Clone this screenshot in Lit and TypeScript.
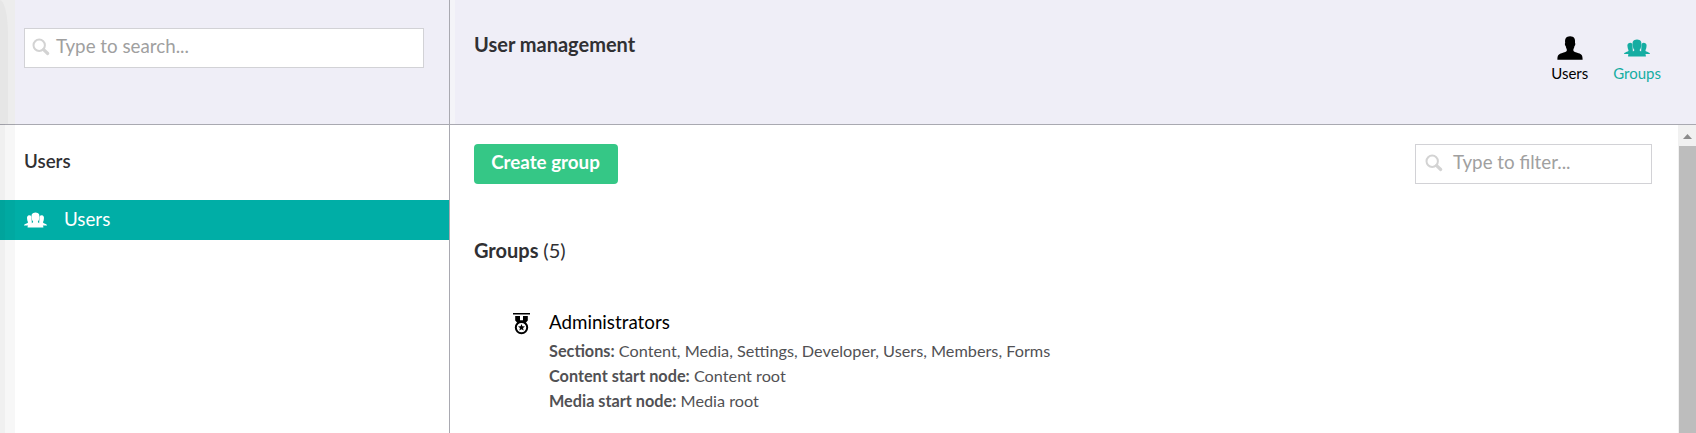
import { LitElement, html, css, svg } from "lit";
import { customElement } from "lit/decorators.js";

const magnifier = html`<svg class="glass" viewBox="0 0 18 18" width="18" height="18">
  <circle cx="7.2" cy="7.2" r="5.7" fill="none" stroke="#d3d3d3" stroke-width="2"/>
  <path d="M11.6 11.6L15.7 15.5" stroke="#d3d3d3" stroke-width="3.2" stroke-linecap="round"/>
</svg>`;

const crowdShapes = svg`
  <path d="M0 13.2C.4 11.6 3.4 11.5 4 10.4C4.1 9.6 3.2 8.8 3.2 7.4C2.6 5 3.4 3.4 5.4 3.3C7.2 3.3 7.8 4.4 7.6 7L8 13.4H0Z"/>
  <path d="M23 13.2C22.6 11.6 19.6 11.5 19 10.4C18.9 9.6 19.8 8.8 19.8 7.4C20.4 5 19.6 3.4 17.6 3.3C15.8 3.3 15.2 4.4 15.4 7L15 13.4H23Z"/>
  <path class="front" d="M3.6 15.5C3.6 12.2 5.2 12 7 11.4C8.8 10.8 9.2 10.5 9.1 9.6C8.2 8.6 7.9 7.3 7.8 6C7.1 2.5 8 .5 11.5 .4C15 .5 15.9 2.5 15.2 6C15.1 7.3 14.8 8.6 13.9 9.6C13.8 10.5 14.2 10.8 16 11.4C17.8 12 19.4 12.2 19.4 15.5Z"/>`;

const crowd = (w: number, h: number) => html`<svg viewBox="0 0 23 16" width=${w} height=${h} preserveAspectRatio="none" fill="currentColor">${crowdShapes}</svg>`;

const person = html`<svg viewBox="0 0 26 24" width="26" height="24" fill="currentColor">
  <path d="M.4 23.7C.4 18.8 1.8 18.1 4.6 17.2C7.6 16.2 9.8 15.9 9.9 14.2C10 13 9 12 8.7 9.9C7.9 9.6 7.6 7.2 8.2 6.9C7.7 2.6 9 .3 13.1 .2C17.2 .3 18.4 2.6 18 6.9C18.6 7.2 18.3 9.6 17.5 9.9C17.2 12 16.2 13 16.3 14.2C16.4 15.9 18.6 16.2 21.6 17.2C24.4 18.1 25.6 18.8 25.6 23.7Z"/>
</svg>`;

const medal = html`<svg viewBox="0 0 17 22" width="17" height="22">
  <path d="M0 0H17V1.5H0Z"/>
  <path d="M2.2 3H7V7.2H10V3H14.8V7.6L12.5 10H4.5L2.2 7.6Z"/>
  <circle cx="8.5" cy="14.6" r="5.7" fill="#fff" stroke="#000" stroke-width="2"/>
  <path d="M8.5 10.9L9.45 13.3L12 13.45L10 15.1L10.7 17.6L8.5 16.2L6.3 17.6L7 15.1L5 13.45L7.55 13.3Z"/>
</svg>`;

@customElement("app-root")
export class AppRoot extends LitElement {
  static styles = css`
    :host { display: block; height: 433px; overflow: hidden; background: #fff; color: #303033;
      font-family: Lato, "Liberation Sans", sans-serif; font-size: 18.75px; line-height: 24px; }
    * { box-sizing: border-box; }
    svg { display: block; flex: none; }
    .page { display: grid; grid-template-columns: 450px 1fr; height: 433px; position: relative; }
    .side, .main { display: flex; flex-direction: column; min-width: 0; }
    .side { border-right: 1px solid #a9a9b1; }
    .top { height: 125px; flex: none; background: #efeef7; border-bottom: 1px solid #a9a9b1; display: flex; }
    .side .top { padding: 28px 25px 0 24px; }
    .main .top { padding: 32px 35px 0 24px; justify-content: space-between; box-shadow: inset 5px 0 #f4f4f8; }
    .field { display: flex; height: 40px; border: 1px solid #d2d2d6; background: #fff; color: #a0a0a0; }
    .search { width: 400px; padding: 5px 0 0 7px; gap: 6px; }
    .search .glass { margin-top: 4px; }
    .filter { width: 237px; padding: 5px 0 0 9px; gap: 10px; }
    .filter .glass { margin-top: 4px; }
    .sidehead { padding: 24px 24px 0; height: 75px; margin: 0; font-size: 18.75px; font-weight: 600; line-height: 24px; }
    .item { height: 40px; display: flex; padding: 7px 24px 0; gap: 17px; background: #00aea6; color: #fff; }
    .item svg { margin-top: 5px; }
    h1, h2 { margin: 0; font-size: 20px; font-weight: 700; line-height: 24px; }
    .tabs { display: flex; gap: 25px; font-size: 15px; line-height: 20px; color: #000; }
    .tab { display: flex; flex-direction: column; align-items: center; }
    .tab svg { margin-top: 4px; }
    .tab.users svg { margin-bottom: 3px; }
    .tab.on { color: #15ada2; }
    .tab.on svg { margin: 7px 0 6px; }
    .body { display: grid; grid-template-columns: 1fr 18px; flex: 1; }
    .content { padding: 19px 26px 0 24px; }
    .bar { display: flex; justify-content: space-between; }
    .create { width: 144px; height: 40px; border: 0; border-radius: 4px; background: #35c786; color: #fff;
      font: 700 18.75px/24px Lato, sans-serif; padding: 0 1px 5px 0; }
    h2 { margin-top: 54px; }
    .thin { font-weight: 400; }
    .group { display: flex; padding: 48px 0 0 39px; gap: 19px; }
    .group svg { margin-top: 3px; }
    .name { color: #000; height: 28px; }
    .line { font-size: 16.25px; line-height: 25px; color: #515154; }
    .scroll { background: #f1f1f1; display: flex; flex-direction: column; }
    .up { height: 21px; display: flex; justify-content: center; padding-top: 9px; }
    .thumb { flex: 1; margin-left: 1px; background: #bdbdbd; }
    .shade { position: absolute; left: 0; top: 0; width: 15px; height: 433px; pointer-events: none;
      background: linear-gradient(90deg, rgba(0,0,0,.06) 0 5px, rgba(0,0,0,.03) 5px 15px); }
    .corner { position: absolute; left: 0; top: 0; width: 15px; height: 124px; background: #ededed; }
    .curve { position: absolute; left: 0; top: 0; width: 8px; height: 124px; background: #e6e6e6; border-top-right-radius: 8px 35px; }
  `;

  render() {
    return html`<div class="page">
      <aside class="side">
        <div class="top"><div class="field search">${magnifier}<span>Type to search...</span></div></div>
        <h3 class="sidehead">Users</h3>
        <div class="item">${crowd(23, 16)}<span>Users</span></div>
      </aside>
      <main class="main">
        <header class="top">
          <h1>User management</h1>
          <nav class="tabs">
            <div class="tab users">${person}<span>Users</span></div>
            <div class="tab on">${crowd(26, 18)}<span>Groups</span></div>
          </nav>
        </header>
        <div class="body">
          <section class="content">
            <div class="bar">
              <button class="create">Create group</button>
              <div class="field filter">${magnifier}<span>Type to filter...</span></div>
            </div>
            <h2>Groups <span class="thin">(5)</span></h2>
            <div class="group">
              ${medal}
              <div>
                <div class="name">Administrators</div>
                <div class="line"><b>Sections:</b> Content, Media, Settings, Developer, Users, Members, Forms</div>
                <div class="line"><b>Content start node:</b> Content root</div>
                <div class="line"><b>Media start node:</b> Media root</div>
              </div>
            </div>
          </section>
          <div class="scroll">
            <div class="up"><svg width="9" height="5" viewBox="0 0 9 5"><path d="M0 5L4.5 0L9 5Z" fill="#8b8b8b"/></svg></div>
            <div class="thumb"></div>
          </div>
        </div>
      </main>
      <div class="shade"></div>
      <div class="corner"></div>
      <div class="curve"></div>
    </div>`;
  }
}
